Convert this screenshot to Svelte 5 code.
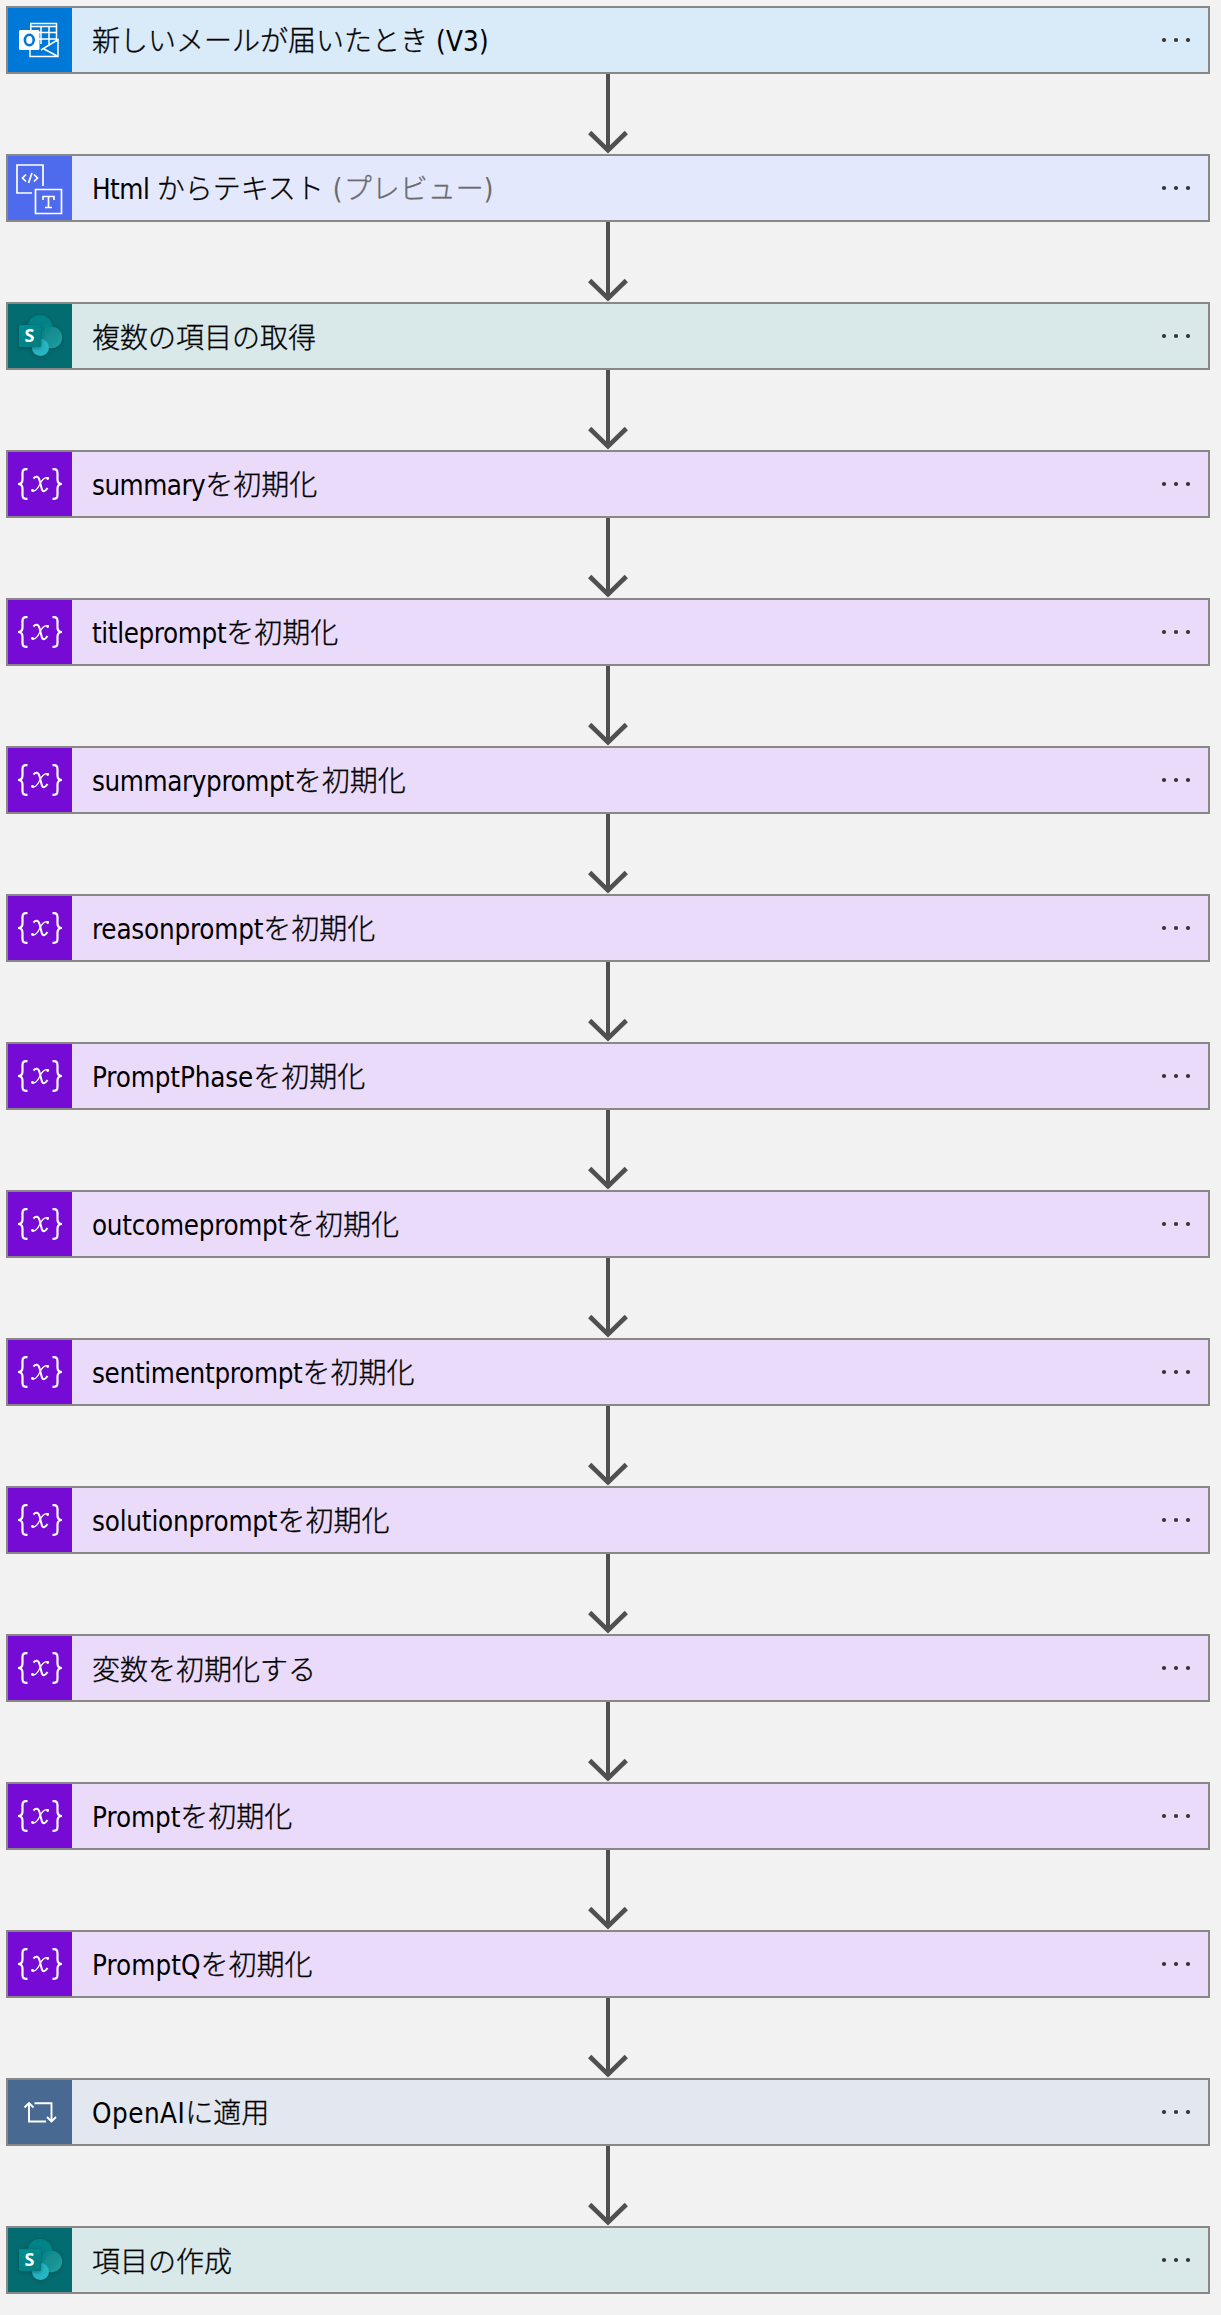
<script>
  // Icon kind, leading text, Latin part, trailing text, tracking of the Latin part in px
  const labels = [
    ['outlook', '新しいメールが届いたとき', ' (V3)', '', 0.2],
    ['html', '', 'Html ', 'からテキスト', -0.5],
    ['share', '複数の項目の取得', '', '', 0],
    ['variable', '', 'summary', 'を初期化', -0.5],
    ['variable', '', 'titleprompt', 'を初期化', -0.37],
    ['variable', '', 'summaryprompt', 'を初期化', -0.38],
    ['variable', '', 'reasonprompt', 'を初期化', -0.2],
    ['variable', '', 'PromptPhase', 'を初期化', -0.12],
    ['variable', '', 'outcomeprompt', 'を初期化', -0.27],
    ['variable', '', 'sentimentprompt', 'を初期化', -0.3],
    ['variable', '', 'solutionprompt', 'を初期化', -0.18],
    ['variable', '変数を初期化する', '', '', 0],
    ['variable', '', 'Prompt', 'を初期化', -0.05],
    ['variable', '', 'PromptQ', 'を初期化', 0.05],
    ['loop', '', 'OpenAI', 'に適用', 0.5],
    ['share', '項目の作成', '', '', 0]
  ];
</script>

<main class="flow">
  {#each labels as [kind, before, latin, after, tracking], i}
    {#if i > 0}
      <svg class="arrow" width="44" height="80" viewBox="0 0 44 80">
        <path d="M22 0V76" fill="none" stroke="#505050" stroke-width="4" />
        <path d="M3.700 58.500L22 76.300L40.300 58.500" fill="none" stroke="#505050" stroke-width="4.600" />
      </svg>
    {/if}
    <section class="card {kind}">
      <div class="icon">
        <svg width="64" height="64" viewBox="0 0 64 64">
          {#if kind === 'outlook'}
            <g fill="none" stroke="#fff" stroke-width="1.500">
              <path d="M22.800 22V15.500H48.500V34M22.800 18.500H48.500M31 24.500H48M31 31H48M33 18.500V36M41 18.500V38M22 42V48.500H50V31.500L33 42M36 41L50 48.500" />
            </g>
            <rect x="11" y="22" width="20.500" height="20" rx="1.500" fill="#fff" />
            <ellipse cx="21.300" cy="32" rx="4.400" ry="5.200" fill="none" stroke="#0078d7" stroke-width="2.600" />
          {:else if kind === 'html'}
            <g fill="none" stroke="#fff" stroke-width="1.700">
              <path d="M35 30V9H9V37H24M27.500 33.500H53.500V57.500H27.500Z" />
              <path d="M18 18.500L14.500 22L18 25.500M26 18.500L29.500 22L26 25.500M24 17L20.500 27" stroke-width="1.700" />
              <path d="M35 44V40.500H46V44M40.500 40.500V51.500M37 51.500H44" stroke-width="1.700" />
            </g>
          {:else if kind === 'share'}
            <defs>
              <filter id="glow{i}" x="-30%" y="-30%" width="160%" height="160%">
                <feDropShadow dx="0" dy="1" stdDeviation="2" flood-color="#003b3e" flood-opacity=".55" />
              </filter>
              <linearGradient id="tile{i}" x1="0" y1="0" x2="1" y2="1">
                <stop offset="0" stop-color="#058f92" /><stop offset="1" stop-color="#037a7e" />
              </linearGradient>
              <linearGradient id="disc{i}" x1="0" y1="0" x2="1" y2="1">
                <stop offset="0" stop-color="#0b8286" /><stop offset="1" stop-color="#209fa2" />
              </linearGradient>
            </defs>
            <g filter="url(#glow{i})">
              <circle cx="32" cy="23.500" r="12.500" fill="#038387" />
              <circle cx="43.500" cy="33.500" r="10.700" fill="url(#disc{i})" />
              <circle cx="32.500" cy="43.500" r="8.500" fill="#28b5c3" />
            </g>
            <rect x="11" y="21" width="22" height="22" rx="1.500" fill="url(#tile{i})" filter="url(#glow{i})" />
            <text class="letter" x="21.500" y="38" text-anchor="middle">S</text>
          {:else if kind === 'variable'}
            <g fill="none" stroke="#fff">
              <path d="M19.500 17.200H18C15.500 17.200 14.500 18.500 14.500 21V27.500C14.500 30.500 13 32 10 32C13 32 14.500 33.500 14.500 36.500V43C14.500 45.500 15.500 46.800 18 46.800H19.500M44.500 17.200H46C48.500 17.200 49.500 18.500 49.500 21V27.500C49.500 30.500 51 32 54 32C51 32 49.500 33.500 49.500 36.500V43C49.500 45.500 48.500 46.800 46 46.800H44.500" stroke-width="2.200" />
              <path d="M25.500 26.500C28 23.500 30.500 24.500 31.500 28L33.500 36C34.500 40.500 37 40 39.500 36" stroke-width="2" />
              <path d="M40.500 26C36.500 24 33 29.500 32 32C30 36 27.500 40.500 24 38.800" stroke-width="1.300" />
            </g>
            <circle cx="39.700" cy="26.500" r="1.400" fill="#fff" /><circle cx="24.500" cy="38.300" r="1.400" fill="#fff" />
          {:else}
            <path d="M21 24V41.500H38M16.500 27.500L21 23L25.500 27.500M26.500 23.200H43.500V41M39 37L43.500 41.500L48 37" fill="none" stroke="#fff" stroke-width="1.900" />
          {/if}
        </svg>
      </div>
      <h2>{before}{#if latin}<span class="latin" style:letter-spacing="{tracking}px">{latin}</span>{/if}{after}{#if kind === 'html'}<span class="preview"><span class="latin">&nbsp;(</span>プレビュー<span class="latin">)</span></span>{/if}</h2>
      <svg class="dots" width="30" height="6" viewBox="0 0 30 6" fill="#333">
        <circle cx="3" cy="3" r="2.100" /><circle cx="15" cy="3" r="2.100" /><circle cx="27" cy="3" r="2.100" />
      </svg>
    </section>
  {/each}
</main>

<style>
  :global(body) { background: #f2f2f2; }
  .flow {
    box-sizing: border-box;
    width: 1221px;
    height: 2315px;
    padding: 6px 11px 0 6px;
    display: flex;
    flex-direction: column;
    background: #f2f2f2;
  }
  .card {
    box-sizing: border-box;
    flex: none;
    height: 68px;
    border: 2px solid #8a8886;
    display: flex;
    align-items: center;
    padding-right: 17px;
  }
  .icon { width: 64px; height: 64px; }
  .icon svg, .arrow, .dots { display: block; }
  .arrow { flex: none; margin-left: 580px; }
  h2 {
    flex: 1;
    margin: 1px 0 0 20px;
    font: 300 28px/40px "Noto Sans", "Noto Sans CJK JP", sans-serif;
    color: #000;
    white-space: pre;
    -webkit-text-stroke-width: 0.3px;
  }
  .latin {
    font-family: "DejaVu Sans Condensed", "DejaVu Sans", sans-serif;
    font-weight: 400;
    font-stretch: condensed;
    font-size: 27.500px;
    -webkit-text-stroke-width: 0;
  }
  .preview { color: #6b6b6b; }
  .preview .latin { letter-spacing: 1.2px; }
  .letter { font: 700 18px "Open Sans", sans-serif; fill: #fff; }
  .outlook { background: #d9eaf8; }
  .outlook .icon { background: #0078d7; }
  .html { background: #e4e8fd; }
  .html .icon { background: #4f6bed; }
  .share { background: #d9e8e8; }
  .share .icon { background: #036c70; }
  .variable { background: #ebdbfa; }
  .variable .icon { background: #770bd6; }
  .loop { background: #e3e7ef; }
  .loop .icon { background: #486991; }
</style>
